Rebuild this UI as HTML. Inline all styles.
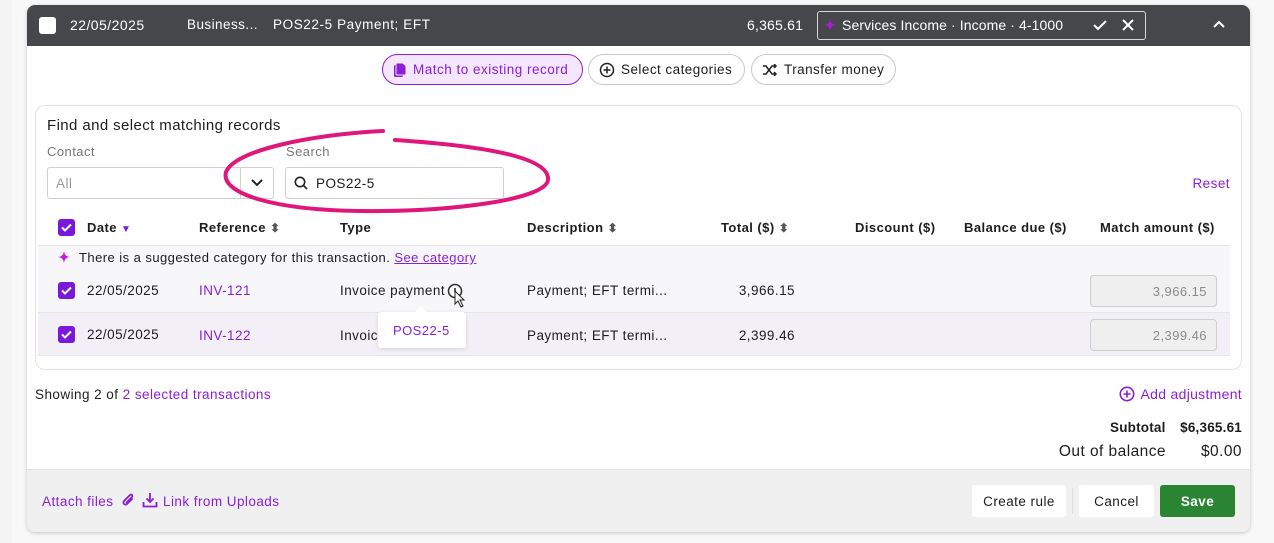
<!DOCTYPE html>
<html><head><meta charset="utf-8">
<style>
*{box-sizing:border-box;margin:0;padding:0}
body{width:1274px;height:543px;overflow:hidden;background:#f8f8f8;font-family:"Liberation Sans",sans-serif;font-size:13.5px;letter-spacing:0.45px;color:#1d1d1f;position:relative}
.a{position:absolute;white-space:nowrap}
.p{color:#8a1fd6}
.cb{position:absolute;width:17px;height:17px;border-radius:3px;background:#7a17d9}
.cb svg{position:absolute;left:2px;top:2px}
.btn{position:absolute;height:31px;border:1px solid #c9c9c9;border-radius:16px;background:#fff;font-size:13.5px;display:flex;align-items:center;padding-left:10px;gap:6px}
.th{font-weight:bold;font-size:13px;top:220px}
.amt{position:absolute;width:127px;height:32px;border:1px solid #cfcfcf;border-radius:4px;background:#efefef;color:#8a8a8a;text-align:right;padding:8px 9px 0 0;font-size:13px}
.fb{position:absolute;top:485px;height:32px;background:#fff;border-radius:3px;font-size:13.5px;display:flex;align-items:center;justify-content:center}
</style></head><body>
<div class="a" style="left:0;top:0;width:12px;height:543px;background:#f3f3f3"></div>
<div class="a" style="left:27px;top:5px;width:1223px;height:527px;background:#fff;border-radius:8px;box-shadow:0 1px 4px rgba(0,0,0,.2);overflow:hidden">
 <div class="a" style="left:0;top:0;width:1223px;height:41px;background:#46474a"></div>
 <div class="a" style="left:0;top:464px;width:1223px;height:63px;background:#f0f0f0;border-top:1px solid #e2e2e2"></div>
</div>
<!-- header -->
<div class="a" style="left:39px;top:17px;width:17px;height:17px;background:#fff;border-radius:3px"></div>
<div class="a" style="left:70px;top:17px;color:#fff;font-size:14px">22/05/2025</div>
<div class="a" style="left:187px;top:17px;color:#fff;font-size:13.5px">Business...</div>
<div class="a" style="left:273px;top:17px;color:#fff;font-size:13.5px;letter-spacing:0.6px">POS22-5 Payment; EFT</div>
<div class="a" style="left:747px;top:17px;color:#fff;font-size:14px;letter-spacing:0.2px">6,365.61</div>
<div class="a" style="left:817px;top:11px;width:329px;height:29px;border:1px solid #d8d8d8;border-radius:3px"></div>
<svg class="a" style="left:824px;top:19px" width="12" height="12" viewBox="0 0 12 12"><path d="M6 0C6.6 4 8 5.4 12 6 8 6.6 6.6 8 6 12 5.4 8 4 6.6 0 6 4 5.4 5.4 4 6 0Z" fill="#b21ad6"/></svg>
<div class="a" style="left:842px;top:17px;color:#fff;font-size:14px;letter-spacing:0.1px">Services Income · Income · 4-1000</div>
<svg class="a" style="left:1093px;top:19px" width="14" height="12" viewBox="0 0 14 12"><path d="M1 6l4 4 8-8" stroke="#fff" stroke-width="2" fill="none"/></svg>
<svg class="a" style="left:1122px;top:19px" width="12" height="12" viewBox="0 0 12 12"><path d="M1 1l10 10M11 1L1 11" stroke="#fff" stroke-width="2"/></svg>
<svg class="a" style="left:1213px;top:20px" width="12" height="8" viewBox="0 0 12 8"><path d="M1 7l5-5 5 5" stroke="#fff" stroke-width="2" fill="none"/></svg>
<!-- tabs -->
<div class="btn" style="left:382px;top:54px;width:201px;background:#f4e6fd;border-color:#8a1fd6;color:#8a1fd6;letter-spacing:0.5px"><svg width="14" height="16" viewBox="0 0 14 16"><rect x="1" y="3" width="9" height="12" rx="1.5" fill="#8a1fd6"/><path d="M4 1h6l3 3v8a1 1 0 0 1-1 1H4a1 1 0 0 1-1-1V2a1 1 0 0 1 1-1z" fill="#8a1fd6" stroke="#f4e6fd" stroke-width="1"/></svg>Match to existing record</div>
<div class="btn" style="left:588px;top:54px;width:157px"><svg width="16" height="16" viewBox="0 0 16 16"><circle cx="8" cy="8" r="6.5" stroke="#222" stroke-width="1.5" fill="none"/><path d="M8 4.5v7M4.5 8h7" stroke="#222" stroke-width="1.5"/></svg>Select categories</div>
<div class="btn" style="left:751px;top:54px;width:145px"><svg width="16" height="12" viewBox="0 0 16 12"><path d="M1 2h3l6 8h4M1 10h3l6-8h4M12 0l2 2-2 2M12 8l2 2-2 2" stroke="#222" stroke-width="1.5" fill="none"/></svg>Transfer money</div>
<!-- panel -->
<div class="a" style="left:35px;top:105px;width:1207px;height:265px;border:1px solid #e3e3e3;border-radius:10px"></div>
<div class="a" style="left:47px;top:117px;font-size:15px;letter-spacing:0.4px">Find and select matching records</div>
<div class="a" style="left:47px;top:144px;color:#777;font-size:13px">Contact</div>
<div class="a" style="left:286px;top:144px;color:#777;font-size:13px">Search</div>
<div class="a" style="left:47px;top:167px;width:227px;height:32px;border:1px solid #cfcfcf;border-radius:3px"></div>
<div class="a" style="left:240px;top:167px;width:1px;height:32px;background:#cfcfcf"></div>
<div class="a" style="left:56px;top:176px;color:#999">All</div>
<svg class="a" style="left:251px;top:179px" width="12" height="8" viewBox="0 0 12 8"><path d="M1 1l5 5 5-5" stroke="#222" stroke-width="2" fill="none"/></svg>
<div class="a" style="left:285px;top:167px;width:219px;height:32px;border:1px solid #cfcfcf;border-radius:3px"></div>
<svg class="a" style="left:294px;top:176px" width="14" height="14" viewBox="0 0 14 14"><circle cx="6" cy="6" r="4.7" stroke="#222" stroke-width="1.6" fill="none"/><path d="M9.5 9.5l3.5 3.5" stroke="#222" stroke-width="1.6"/></svg>
<div class="a" style="left:316px;top:176px;font-size:13.5px">POS22-5</div>
<svg class="a" style="left:0;top:0" width="1274" height="300" viewBox="0 0 1274 300"><path d="M383 131C310 135 235 150 226 172 220 194 275 210 360 211 450 212 545 200 548 180 550 160 500 147 395 140" stroke="#e0177a" stroke-width="4" fill="none" stroke-linecap="round"/></svg>
<div class="a p" style="right:44px;top:176px">Reset</div>
<!-- table -->
<div class="cb" style="left:58px;top:219px"><svg width="13" height="13" viewBox="0 0 13 13"><path d="M2 6.5l3 3 6-6" stroke="#fff" stroke-width="2" fill="none"/></svg></div>
<div class="a th" style="left:87px">Date <span style="color:#7a17d9;font-size:10px">▼</span></div>
<div class="a th" style="left:199px">Reference <span style="color:#555;font-size:12px">⬍</span></div>
<div class="a th" style="left:340px">Type</div>
<div class="a th" style="left:527px">Description <span style="color:#555;font-size:12px">⬍</span></div>
<div class="a th" style="left:721px">Total ($) <span style="color:#555;font-size:12px">⬍</span></div>
<div class="a th" style="left:855px">Discount ($)</div>
<div class="a th" style="left:964px">Balance due ($)</div>
<div class="a th" style="left:1100px">Match amount ($)</div>
<div class="a" style="left:38px;top:245px;width:1192px;height:67px;background:#f7f6f8;border-top:1px solid #e6e6e6"></div>
<div class="a" style="left:38px;top:312px;width:1192px;height:44px;background:#f3eff6;border-top:1px solid #e6e6e6;border-bottom:1px solid #e6e6e6"></div>
<svg class="a" style="left:58px;top:251px" width="12" height="12" viewBox="0 0 12 12"><path d="M6 0C6.6 4 8 5.4 12 6 8 6.6 6.6 8 6 12 5.4 8 4 6.6 0 6 4 5.4 5.4 4 6 0Z" fill="#c21ad6"/></svg>
<div class="a" style="left:79px;top:250px;font-size:13px">There is a suggested category for this transaction. <span class="p" style="text-decoration:underline">See category</span></div>
<div class="cb" style="left:58px;top:282px"><svg width="13" height="13" viewBox="0 0 13 13"><path d="M2 6.5l3 3 6-6" stroke="#fff" stroke-width="2" fill="none"/></svg></div>
<div class="a" style="left:87px;top:283px;font-size:13.5px">22/05/2025</div>
<div class="a p" style="left:199px;top:283px;font-size:13.5px">INV-121</div>
<div class="a" style="left:340px;top:283px;font-size:13.5px">Invoice payment</div>
<svg class="a" style="left:446px;top:282px" width="22" height="28" viewBox="0 0 22 28"><circle cx="9" cy="9" r="6.5" stroke="#333" stroke-width="1.6" fill="#fff"/><path d="M9 6v4" stroke="#333" stroke-width="1.6"/><path d="M9 9l0 13 3-3 3 6 2-1-3-6h4z" fill="#fff" stroke="#222" stroke-width="1"/></svg>
<div class="a" style="left:527px;top:283px;font-size:13.5px">Payment; EFT termi...</div>
<div class="a" style="right:479px;top:283px;font-size:13.5px">3,966.15</div>
<div class="amt" style="left:1090px;top:275px">3,966.15</div>
<div class="cb" style="left:58px;top:326px"><svg width="13" height="13" viewBox="0 0 13 13"><path d="M2 6.5l3 3 6-6" stroke="#fff" stroke-width="2" fill="none"/></svg></div>
<div class="a" style="left:87px;top:327px;font-size:13.5px">22/05/2025</div>
<div class="a p" style="left:199px;top:328px;font-size:13.5px">INV-122</div>
<div class="a" style="left:340px;top:328px;font-size:13.5px">Invoic</div>
<div class="a" style="left:527px;top:328px;font-size:13.5px">Payment; EFT termi...</div>
<div class="a" style="right:479px;top:328px;font-size:13.5px">2,399.46</div>
<div class="amt" style="left:1090px;top:319px">2,399.46</div>
<div class="a" style="left:378px;top:312px;width:88px;height:36px;background:#fff;border-radius:3px;box-shadow:0 1px 4px rgba(0,0,0,.12)"></div>
<div class="a" style="left:415px;top:306px;width:0;height:0;border-left:6px solid transparent;border-right:6px solid transparent;border-bottom:6px solid #fff"></div>
<div class="a p" style="left:393px;top:323px;font-size:13px">POS22-5</div>
<!-- summary -->
<div class="a" style="left:35px;top:387px">Showing 2 of <span class="p">2 selected transactions</span></div>
<svg class="a" style="left:1119px;top:386px" width="16" height="16" viewBox="0 0 16 16"><circle cx="8" cy="8" r="6.7" stroke="#8a1fd6" stroke-width="1.6" fill="none"/><path d="M8 4.5v7M4.5 8h7" stroke="#8a1fd6" stroke-width="1.6"/></svg>
<div class="a p" style="right:32px;top:386px;font-size:14px;letter-spacing:0.3px">Add adjustment</div>
<div class="a" style="left:1110px;top:420px;font-weight:bold;letter-spacing:0.2px">Subtotal</div>
<div class="a" style="right:32px;top:420px;font-weight:bold;letter-spacing:0.2px">$6,365.61</div>
<div class="a" style="right:108px;top:443px;font-size:15.5px">Out of balance</div>
<div class="a" style="right:32px;top:443px;font-size:15.5px">$0.00</div>
<!-- footer -->
<div class="a p" style="left:42px;top:494px;font-size:13.5px">Attach files</div>
<svg class="a" style="left:121px;top:493px" width="14" height="16" viewBox="0 0 14 16"><path d="M11 6L6 11a2 2 0 0 1-3-3l6-6a1.3 1.3 0 0 1 2 2L5.5 9.5" stroke="#8a1fd6" stroke-width="1.8" fill="none" stroke-linecap="round"/></svg>
<svg class="a" style="left:142px;top:492px" width="16" height="16" viewBox="0 0 16 16"><path d="M8 1v9M4.5 6.5L8 10l3.5-3.5M1.5 10v4.5h13V10" stroke="#8a1fd6" stroke-width="1.8" fill="none"/></svg>
<div class="a p" style="left:163px;top:494px;font-size:13.5px">Link from Uploads</div>
<div class="fb" style="left:972px;width:94px">Create rule</div>
<div class="a" style="left:1072px;top:488px;width:1px;height:26px;background:#ddd"></div>
<div class="fb" style="left:1079px;width:75px">Cancel</div>
<div class="fb" style="left:1160px;width:75px;background:#2a8532;color:#fff;font-weight:bold">Save</div>
</body></html>
